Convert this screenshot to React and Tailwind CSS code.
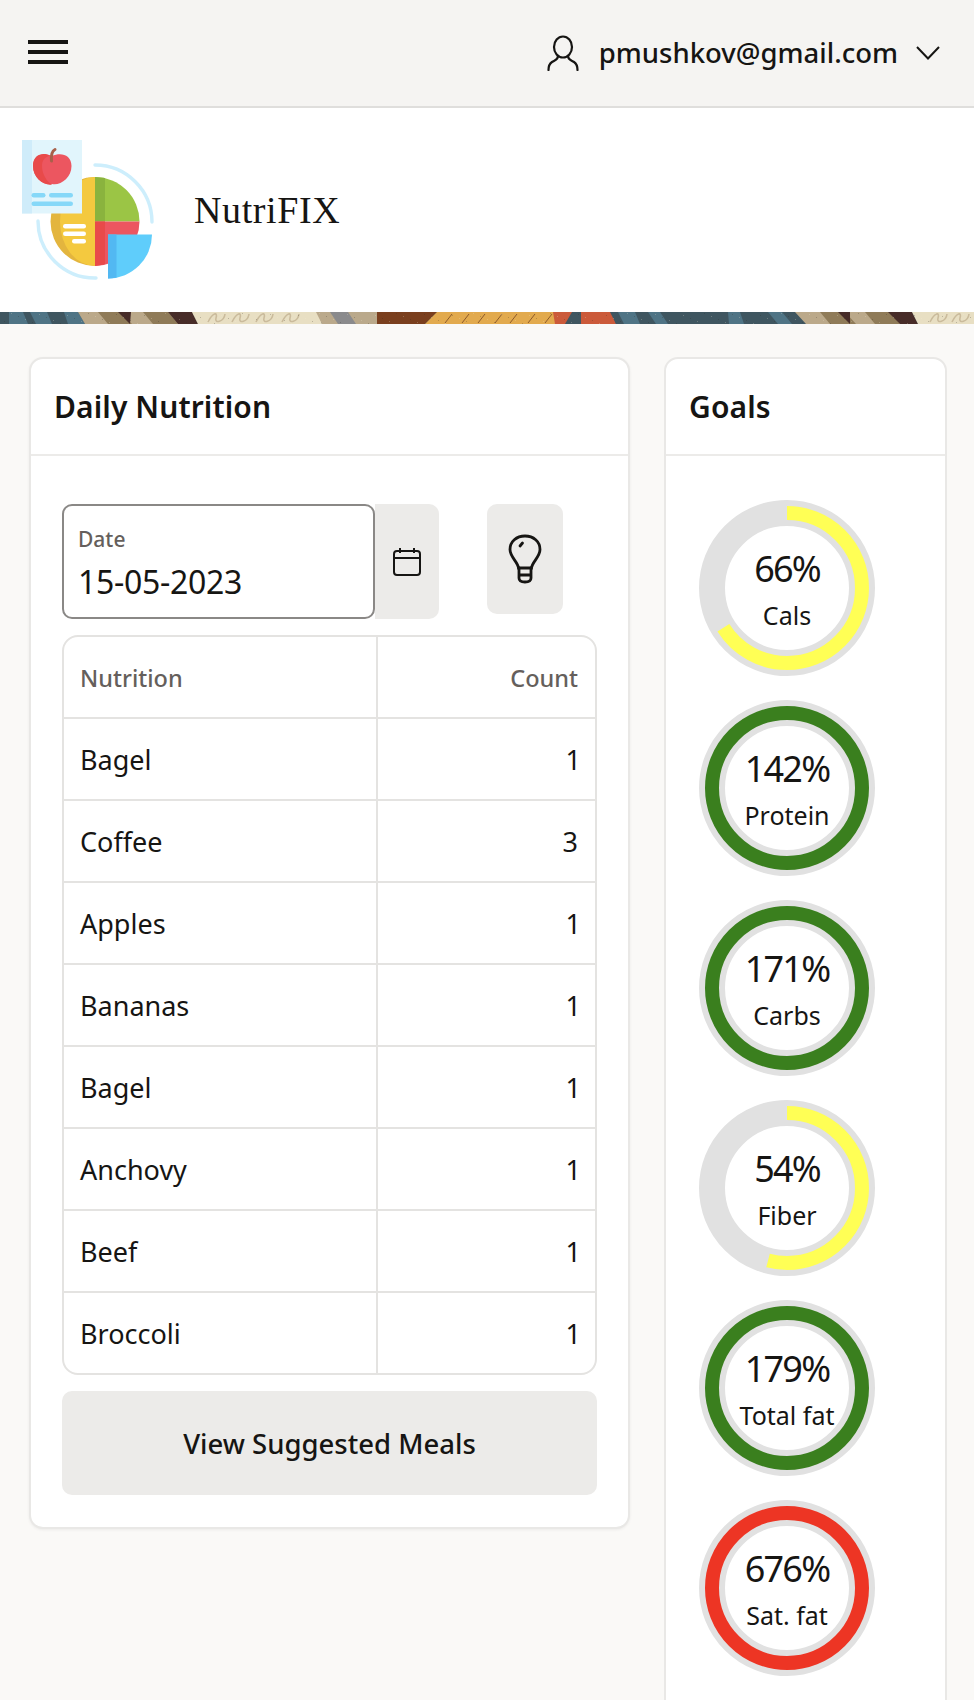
import React from "react";

const rows = [["Bagel",1],["Coffee",3],["Apples",1],["Bananas",1],["Bagel",1],["Anchovy",1],["Beef",1],["Broccoli",1]];
const goals = [
  ["66%","Cals",66,"#ffff55"],
  ["142%","Protein",100,"#3a7f1e"],
  ["171%","Carbs",100,"#3a7f1e"],
  ["54%","Fiber",54,"#ffff55"],
  ["179%","Total fat",100,"#3a7f1e"],
  ["676%","Sat. fat",100,"#ed3524"],
];

function Logo() {
  return (
    <svg viewBox="20 19 136 142" className="w-[136px] h-[142px] shrink-0">
      <path d="M152 102 A57 57 0 0 0 95 45" fill="none" stroke="#cdeefc" strokeWidth="3.4" strokeLinecap="round" />
      <path d="M96 158 A57 57 0 0 1 38 101" fill="none" stroke="#cdeefc" strokeWidth="3.4" strokeLinecap="round" />
      <path d="M95 57 A44.5 44.5 0 0 0 95 146Z" fill="#e3b53e" />
      <path d="M95 57 A35 44.5 0 0 0 95 146Z" fill="#f4c93f" />
      <path d="M95 57 A44.5 44.5 0 0 1 139.500 101.500 L95 101.500Z" fill="#9bc545" />
      <path d="M95 57 L105 58 L105 101.500 L95 101.500Z" fill="#8ab33e" />
      <path d="M95 101.500 H139.500 A44.5 44.5 0 0 1 95 146Z" fill="#ec5660" />
      <path d="M95 101.500 H105 V144 A44.5 44.5 0 0 1 95 146Z" fill="#e84a4a" />
      <path d="M108 114.500 H152 A44 44 0 0 1 108 158.500Z" fill="#5fcdfb" />
      <path d="M108 114.500 H116.500 V157.500 A44 44 0 0 1 108 158.500Z" fill="#52b8f2" />
      <rect x="63" y="104" width="23" height="4.5" rx="2.200" fill="#fff" />
      <rect x="63" y="111.500" width="23" height="4.500" rx="2.200" fill="#fff" />
      <rect x="72" y="119" width="14" height="4.500" rx="2.200" fill="#fff" />
      <rect x="22" y="20" width="60" height="73.500" fill="#e1f5fc" />
      <rect x="22" y="20" width="10" height="73.500" fill="#cfecfa" />
      <path d="M52 36 C44 32 33 34 33 46 C33 58 44 66 52 64 C60 66 71.500 58 71.500 46 C71.500 34 60 32 52 36Z" fill="#ec5660" />
      <path d="M50 35.500 C43 32 33 34 33 46 C33 58 44 66 52 64.500 C47 62 42 54 42 46 C42 40 45 37 50 35.500Z" fill="#e84a4a" />
      <path d="M51.500 41 C51 35 52 31 55 29.500" fill="none" stroke="#a8604a" strokeWidth="3" strokeLinecap="round" />
      <rect x="31.500" y="73" width="14" height="4.500" rx="2.200" fill="#86d8f8" />
      <rect x="49" y="73" width="24" height="4.500" rx="2.200" fill="#86d8f8" />
      <rect x="31.500" y="81.500" width="41.500" height="4.500" rx="2.200" fill="#86d8f8" />
    </svg>
  );
}

function Banner() {
  const polys = [
    ["0,0 974,0 974,12 0,12", "#3f5660"],
    ["9,0 23,0 28,12 9,12", "#4f7485"],
    ["30,0 47,0 52,12 36,12", "#4f7485"],
    ["64,0 78,0 85,12 68,12", "#4f7485"],
    ["78,0 192,0 198,12 85,12", "#bba98a"],
    ["98,0 120,0 132,12 108,12", "#8f7b58"],
    ["118,0 131,0 130,12", "#472c28"],
    ["143,0 168,0 178,12 153,12", "#8f7b58"],
    ["168,0 192,0 198,12 178,12", "#472c28"],
    ["192,0 318,0 322,12 198,12", "#e8dfc3"],
    ["316,0 378,0 377,12 322,12", "#baa98b"],
    ["330,0 348,0 356,12 338,12", "#8a8a8c"],
    ["377,0 437,0 425,12 377,12", "#7a3f1e"],
    ["437,0 560,0 556,12 425,12", "#e2aa4e"],
    ["553,0 572,0 565,12 555,12", "#cb5a3a"],
    ["581,0 610,0 616,12 581,12", "#cb5a3a"],
    ["612,0 795,0 806,12 616,12", "#3f5660"],
    ["618,0 635,0 640,12 624,12", "#4f7485"],
    ["648,0 660,0 668,12 656,12", "#4f7485"],
    ["728,0 740,0 744,12 729,12", "#4f7485"],
    ["768,0 782,0 792,12 778,12", "#4f7485"],
    ["795,0 890,0 916,12 806,12", "#bba98a"],
    ["820,0 845,0 856,12 830,12", "#8f7b58"],
    ["838,0 850,0 850,12", "#472c28"],
    ["865,0 890,0 900,12 875,12", "#8f7b58"],
    ["888,0 912,0 918,12 900,12", "#472c28"],
    ["912,0 974,0 974,12 918,12", "#e8dfc3"],
  ];
  const squiggles = [208,232,256,282,930,952];
  const ticks = [445,462,478,495,510,528,545];
  const specks = [];
  for (let x = 4; x < 974; x += 7) {
    specks.push([x, 1 + ((x * 13) % 11), (x * 7) % 2 === 0 ? "#2f2a22" : "#f3ead2"]);
  }
  return (
    <svg viewBox="0 0 974 12" preserveAspectRatio="none" className="block w-full h-[12px]">
      {polys.map(([p, c], i) => <polygon key={i} points={p} fill={c} />)}
      {squiggles.map((x) => (
        <path key={x} d={`M${x} 10 C${x + 5} 0 ${x + 10} 0 ${x + 8} 6 C${x + 6} 12 ${x + 16} 10 ${x + 17} 2`} fill="none" stroke="#cabb9c" strokeWidth="1.600" />
      ))}
      {ticks.map((x) => (
        <path key={x} d={`M${x} 11 L${x + 7} 2`} stroke="#8d5a2b" strokeWidth="1" />
      ))}
      {specks.map(([x, y, c]) => <rect key={x} x={x} y={y} width="1" height="1" fill={c} opacity="0.25" />)}
    </svg>
  );
}

function Ring({ pct, label, value, color }) {
  const r = 75;
  const c = 2 * Math.PI * r;
  return (
    <div className="relative w-[176px] h-[176px]">
      <svg viewBox="0 0 176 176" className="block w-[176px] h-[176px]">
        <circle cx="88" cy="88" r="75" fill="none" stroke="#e1e1e1" strokeWidth="26" />
        <circle
          cx="88" cy="88" r={r} fill="none" stroke={color} strokeWidth="14"
          strokeDasharray={`${(c * value) / 100} ${c}`}
          transform="rotate(-90 88 88)"
        />
      </svg>
      <div className="absolute inset-0 flex flex-col items-center text-[#161513]">
        <span className="mt-[48px] text-[36px] tracking-[-1.8px] leading-[42px]">{pct}</span>
        <span className="mt-[7px] text-[25px] leading-[36px] whitespace-nowrap">{label}</span>
      </div>
    </div>
  );
}

export default function App() {
  return (
    <div className="h-[1700px] overflow-hidden bg-[#faf9f7] text-[#161513] font-['Noto_Sans','Open_Sans',sans-serif]">
      <header className="h-[108px] flex items-center bg-[#f5f4f2] border-b-2 border-[#dfdedc] pl-[28px] pr-[34px]">
        <div className="flex flex-col gap-[6px] mb-[2px]">
          <span className="block w-[40px] h-[4px] bg-[#161513]" />
          <span className="block w-[40px] h-[4px] bg-[#161513]" />
          <span className="block w-[40px] h-[4px] bg-[#161513]" />
        </div>
        <div className="ml-auto flex items-center">
          <svg viewBox="0 0 32 36" className="w-[32px] h-[36px]" fill="none" stroke="#161513" strokeWidth="2.200" strokeLinecap="round">
            <ellipse cx="16" cy="12" rx="9" ry="10.500" />
            <path d="M11 21 C11 25 8 25 5 27 C2 29 1.500 31 1.500 35" />
            <path d="M21 21 C21 25 24 25 27 27 C30 29 30.500 31 30.500 35" />
          </svg>
          <span className="ml-[20px] text-[27.5px] font-medium leading-[36px]">pmushkov@gmail.com</span>
          <svg viewBox="0 0 24 14" className="ml-[18px] w-[24px] h-[14px]" fill="none" stroke="#161513" strokeWidth="2">
            <path d="M1 1 L12 12.500 L23 1" />
          </svg>
        </div>
      </header>

      <section className="h-[204px] bg-white flex items-center pl-[20px]">
        <Logo />
        <span className="ml-[38px] font-['Liberation_Serif',serif] text-[38px] tracking-[0.6px] leading-none">NutriFIX</span>
      </section>

      <Banner />

      <main className="flex items-start gap-[34px] pt-[33px] pl-[29px] pr-[27px]">
        <div className="w-[601px] shrink-0 bg-white border-2 border-[#e9e8e6] rounded-[14px] shadow-[0_1px_3px_rgba(0,0,0,0.06)]">
          <div className="h-[97px] flex items-center px-[23px] border-b-2 border-[#ecebe9]">
            <h2 className="text-[30px] font-semibold tracking-[0.1px] leading-[40px]">Daily Nutrition</h2>
          </div>
          <div className="pt-[48px] pb-[32px] px-[31px]">
            <div className="flex items-start">
              <div className="w-[313px] h-[115px] bg-white border-2 border-[#8a8886] rounded-[10px] pl-[14px] pt-[20px]">
                <div className="text-[21px] font-medium leading-[26px] text-[#655f5c]">Date</div>
                <div className="mt-[8px] text-[32px] tracking-[-0.3px] leading-[44px]">15-05-2023</div>
              </div>
              <div className="w-[64px] h-[115px] bg-[#ecebe9] rounded-r-[10px] flex items-center justify-center">
                <svg viewBox="0 0 30 30" className="w-[30px] h-[30px]" fill="none" stroke="#161513" strokeWidth="2">
                  <rect x="2" y="4" width="26" height="24" rx="3" />
                  <path d="M2 11 H28 M8 1 V6 M22 1 V6" />
                </svg>
              </div>
              <div className="ml-[48px] w-[76px] h-[110px] bg-[#ecebe9] rounded-[10px] flex items-center justify-center">
                <svg viewBox="0 0 34 50" className="w-[34px] h-[50px]" fill="none" stroke="#161513" strokeWidth="2.800" strokeLinecap="round">
                  <path d="M10.500 34 C10 28 2 23 2 15.500 C2 7.500 8.500 2 17 2 C25.500 2 32 7.500 32 15.500 C32 23 24 28 23.500 34 Z" />
                  <path d="M11 34 V44 C11 47 14 48 17 48 C20 48 23 47 23 44 V34 M11 41 H23" />
                  <path d="M12 12 L14.500 9" />
                </svg>
              </div>
            </div>

            <div className="mt-[16px] border-2 border-[#e4e3e1] rounded-[16px] text-[27px] overflow-hidden">
              <div className="h-[80px] flex items-center text-[23.5px] font-medium text-[#655f5c]">
                <div className="w-[314px] h-full flex items-center pl-[16px] pt-[4px] border-r-2 border-[#e4e3e1]">Nutrition</div>
                <div className="flex-1 text-right pr-[17px] pt-[4px]">Count</div>
              </div>
              {rows.map(([name, n], i) => (
                <div key={i} className="h-[82px] flex items-center border-t-2 border-[#e4e3e1]">
                  <div className="w-[314px] h-full flex items-center pl-[16px] pt-[2px] border-r-2 border-[#e4e3e1]">{name}</div>
                  <div className={n === 1 ? "flex-1 text-right pr-[14px] pt-[2px]" : "flex-1 text-right pr-[17px] pt-[2px]"}>{n}</div>
                </div>
              ))}
            </div>

            <button className="mt-[16px] w-full h-[104px] pt-[2px] rounded-[10px] bg-[#ecebe9] text-[27.5px] font-medium">View Suggested Meals</button>
          </div>
        </div>

        <div className="w-[283px] shrink-0 bg-white border-2 border-[#e9e8e6] rounded-[14px]">
          <div className="h-[97px] flex items-center px-[23px] border-b-2 border-[#ecebe9]">
            <h2 className="text-[30px] font-semibold tracking-[0.1px] leading-[40px]">Goals</h2>
          </div>
          <div className="pt-[44px] pl-[33px] flex flex-col gap-[24px] pb-[40px]">
            {goals.map(([p, l, v, c]) => <Ring key={l} pct={p} label={l} value={v} color={c} />)}
          </div>
        </div>
      </main>
    </div>
  );
}
